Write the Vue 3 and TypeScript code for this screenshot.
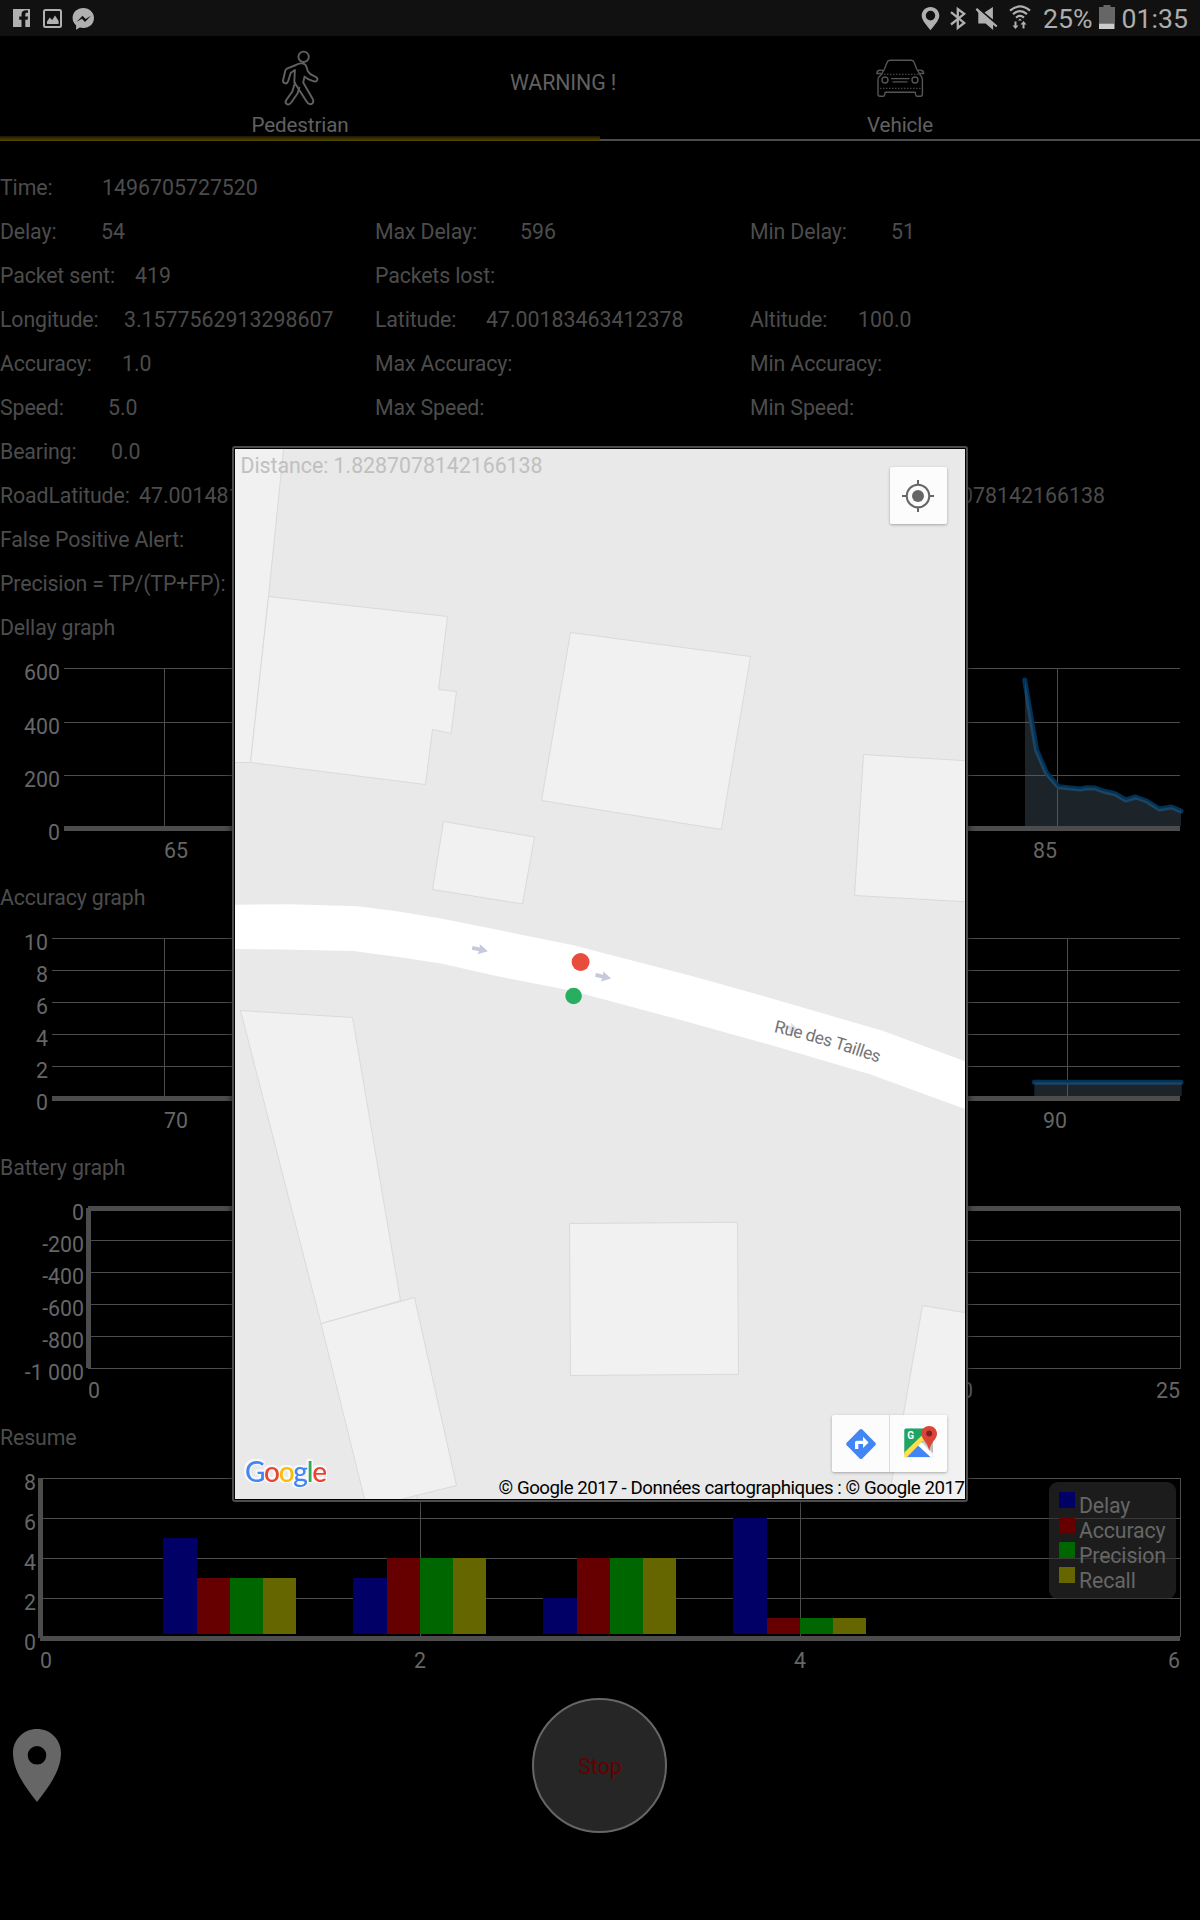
<script setup lang="ts">
interface Field {
  label: string
  value?: string
  offset?: number
}

interface Tick {
  text: string
  x: number
  anchor: 'start' | 'middle' | 'end'
}

interface Chart {
  title: string
  left: number
  grid: number[]
  axisY: number
  bottom: number
  verticals: number[]
  yLabels: string[]
  yPositions: number[]
  ticks: Tick[]
  leftAxis: boolean
  line?: string
  area?: string
  bars?: boolean
}

const rows: Field[][] = [
  [{ label: 'Time:', value: '1496705727520', offset: 102 }],
  [
    { label: 'Delay:', value: '54', offset: 101 },
    { label: 'Max Delay:', value: '596', offset: 145 },
    { label: 'Min Delay:', value: '51', offset: 141 },
  ],
  [
    { label: 'Packet sent:', value: '419', offset: 135 },
    { label: 'Packets lost:' },
  ],
  [
    { label: 'Longitude:', value: '3.1577562913298607', offset: 124 },
    { label: 'Latitude:', value: '47.00183463412378', offset: 111 },
    { label: 'Altitude:', value: '100.0', offset: 108 },
  ],
  [
    { label: 'Accuracy:', value: '1.0', offset: 122 },
    { label: 'Max Accuracy:' },
    { label: 'Min Accuracy:' },
  ],
  [
    { label: 'Speed:', value: '5.0', offset: 108 },
    { label: 'Max Speed:' },
    { label: 'Min Speed:' },
  ],
  [{ label: 'Bearing:', value: '0.0', offset: 111 }],
  [
    { label: 'RoadLatitude:', value: '47.001481', offset: 139 },
    { label: '' },
    { label: '', value: '1.8287078142166138', offset: 145.5 },
  ],
  [{ label: 'False Positive Alert:' }],
  [{ label: 'Precision = TP/(TP+FP):' }],
]

const charts: Chart[] = [
  {
    title: 'Dellay graph',
    left: 64,
    grid: [19, 73, 126],
    axisY: 177,
    bottom: 178,
    verticals: [164, 1057],
    yLabels: ['600', '400', '200', '0'],
    yPositions: [19, 73, 126, 179],
    ticks: [
      { text: '65', x: 164, anchor: 'start' },
      { text: '85', x: 1057, anchor: 'end' },
    ],
    leftAxis: false,
    line: '1024.7,31 1036.5,101 1046.5,124 1058.3,137.7 1080,140 1087,138.8 1095,139 1103,142 1115,144.7 1125.7,151 1135.7,148 1146.7,152 1159.3,160 1171.7,158 1181,162',
    area: '1025,31 1036.5,101 1046.5,124 1058.3,137.7 1080,140 1087,138.8 1095,139 1103,142 1115,144.7 1125.7,151 1135.7,148 1146.7,152 1159.3,160 1171.7,158 1181,162 1181,177 1025,177',
  },
  {
    title: 'Accuracy graph',
    left: 52,
    grid: [19, 51, 83, 115, 147],
    axisY: 177,
    bottom: 178,
    verticals: [164, 1067],
    yLabels: ['10', '8', '6', '4', '2', '0'],
    yPositions: [19, 51, 83, 115, 147, 179],
    ticks: [
      { text: '70', x: 164, anchor: 'start' },
      { text: '90', x: 1067, anchor: 'end' },
    ],
    leftAxis: false,
    line: '1034.3,163.3 1181,163.3',
    area: '1034.3,163.3 1181.7,163.3 1181.7,177 1034.3,177',
  },
  {
    title: 'Battery graph',
    left: 88,
    grid: [51, 83, 115, 147, 179],
    axisY: 17,
    bottom: 180,
    verticals: [1180],
    yLabels: ['0', '-200', '-400', '-600', '-800', '-1 000'],
    yPositions: [19, 51, 83, 115, 147, 179],
    ticks: [
      { text: '0', x: 88, anchor: 'start' },
      { text: '20', x: 973, anchor: 'end' },
      { text: '25', x: 1180, anchor: 'end' },
    ],
    leftAxis: true,
  },
  {
    title: 'Resume',
    left: 40,
    grid: [19, 59, 99, 139],
    axisY: 177,
    bottom: 178,
    verticals: [420, 800, 1180],
    yLabels: ['8', '6', '4', '2', '0'],
    yPositions: [19, 59, 99, 139, 179],
    ticks: [
      { text: '0', x: 40, anchor: 'start' },
      { text: '2', x: 420, anchor: 'middle' },
      { text: '4', x: 800, anchor: 'middle' },
      { text: '6', x: 1180, anchor: 'end' },
    ],
    leftAxis: true,
    bars: true,
  },
]

const series = [
  { name: 'Delay', color: '#000066' },
  { name: 'Accuracy', color: '#660000' },
  { name: 'Precision', color: '#006600' },
  { name: 'Recall', color: '#666600' },
]

const groups: number[][] = [
  [5, 3, 3, 3],
  [3, 4, 4, 4],
  [2, 4, 4, 4],
  [6, 1, 1, 1],
]

const barStarts = [0, 34, 67, 100]
const barWidths = [34, 33, 33, 33]

const bars = groups.flatMap((group, g) =>
  group.map((value, s) => ({
    x: 163 + g * 190 + barStarts[s],
    y: 179 - value * 20,
    width: barWidths[s],
    height: value * 20 - 4,
    color: series[s].color,
  })),
)

const buildings = [
  '235,440 284.5,440 283.5,449.5 268.5,596.5 250.5,762.5 235,762.5 230,762.5 230,440',
  '268.5,596.5 447.5,616.5 438.5,689.5 456.5,691.5 451,733.5 432.5,729.5 425.5,784.5 250.5,762.5',
  '570.5,632.5 750.5,656.5 721.3,829.5 541.5,800.5',
  '443.5,821.5 534.5,837 522.5,904 432.5,889.5',
  '863.5,754.5 970,761 970,902 854.5,895.5',
  '240.5,1010.5 352.5,1017.5 400.5,1300.7 321,1323.7',
  '321,1323.7 414.5,1297.5 456.5,1485.5 400,1499.5 395,1505 366,1505',
  '569.5,1223.5 737.5,1222.3 738.5,1374.3 570.5,1375.5',
  '922.5,1305.5 970,1313.5 970,1505 887.5,1505',
]
</script>

<template>
  <div class="screen">
    <header class="status">
      <svg class="notifications" width="100" height="36" viewBox="0 0 100 36">
        <path fill="#b0b0b0" fill-rule="evenodd" d="M13 9h17v18h-4.7v-7.200h2.300l.5-3.300h-2.800v-2c0-1.200.5-1.700 1.700-1.700H28V10.500c-4-.700-6.500.700-6.500 4v2h-2.300v3.300h2.300V27H13z" />
        <rect x="44" y="10" width="17" height="17" rx="1.500" fill="none" stroke="#b0b0b0" stroke-width="2" />
        <path fill="#b0b0b0" d="M47 24v-2.500l2.800-4 2.300 2.500 3-4.500 3.500 5.500v3z" />
        <path fill="#b0b0b0" d="M83.300 8C77.200 8 72.600 12.300 72.600 18c0 3 1.300 5.500 3.500 7.300v4.500l3.700-2.200c1.100.3 2.300.5 3.500.5 6.100 0 10.700-4.300 10.700-10S89.400 8 83.300 8z" />
        <path fill="#111" d="M76.500 22l6-6.300 3.100 3.200 5.400-3.200-6 6.300-3.100-3.200z" />
      </svg>
      <div class="system">
        <svg width="114" height="36" viewBox="920 0 114 36">
          <path fill="#b0b0b0" fill-rule="evenodd" d="M930.500 7c-5 0-8.800 3.700-8.800 8.500 0 5.200 5.300 10 8.800 14.700 3.500-4.700 8.800-9.500 8.800-14.700 0-4.800-3.800-8.500-8.800-8.500zm0 3.700a4.700 4.900 0 1 1 0 9.800 4.700 4.900 0 1 1 0-9.800z" />
          <path fill="none" stroke="#b0b0b0" stroke-width="2.300" d="M951 12.200l13.200 10.700-6.400 5V9l6.400 4.800L951 24.500" />
          <path fill="#b0b0b0" d="M975.600 9.500l1.500-1.400 20.400 17.600-1.400 1.500-3-2.500v5.300l-7.500-6.500h-7.300v-10.700zM984.500 12.500l8.400-5.500v12.500z" />
          <g fill="none" stroke="#b0b0b0" stroke-width="2.200">
            <path d="M1010 10.700q10-8.500 20 0M1013 14.200q7-6 14 0M1016 17.700q4-3.500 8 0" />
          </g>
          <path fill="#b0b0b0" d="M1020 18.500l2 2h-4zM1014.500 21.500h2v4h2l-3 3.500-3-3.500h2zM1022.500 28.500h2v-4h2l-3-3.500-3 3.500h2z" />
        </svg>
        <span class="percent">25%</span>
        <svg class="battery" width="16" height="36" viewBox="0 0 16 36">
          <path fill="#666" d="M4.500 5h7v2H16v16.500H0V7h4.500z" />
          <rect y="23.500" width="15.500" height="5.500" fill="#ccc" />
        </svg>
        <span class="clock">01:35</span>
      </div>
    </header>

    <nav class="tabs">
      <div class="tab active">
        <svg width="50" height="76" viewBox="274 36 50 76">
          <g fill="none" stroke="#616161" stroke-width="1.900" stroke-linejoin="round">
            <circle cx="302.600" cy="56.800" r="5.200" />
            <path d="M295 65c3-2 7-2.200 9-.5 2 1.500 1.500 4 3 7 1.300 2.200 3.300 3.400 5.700 4.400 2.600 1 4 1.700 3.700 3.700-.4 1.900-2 2.300-4.200 1.600-3.500-1-6.500-2.400-8.700-4.600l-1.300 6 9.500 16.300c1.300 2.400.4 4.500-1.300 5.100-1.800.6-3.600-.3-4.800-2.500l-12.300-19.300.6-12.200-4.200 3-2.600 8.300c-.6 1.800-2 2.400-3.500 1.900-1.400-.5-1.800-1.600-1.400-3.500l2-8.700c.2-1.100.8-1.700 1.700-2.300z" />
            <path d="M294.300 82l-3 9.500-6 8.500c-1.200 2-.7 3.300.4 4 1.600 1 3 .4 4.500-1.500l6.300-9 2-6.500" />
          </g>
        </svg>
        <span>Pedestrian</span>
      </div>
      <div class="tab">
        <svg width="54" height="76" viewBox="873 36 54 76">
          <g fill="none" stroke="#555" stroke-width="1.400" stroke-linejoin="round">
            <path d="M881 75l3.500-6 2.500-6.500c.5-1.600 1.300-2.200 3-2.200h21.200c1.700 0 2.500.6 3 2.200l2.500 6.500 3.500 6c1.800 1.500 2.200 3 2.200 5v14c0 1.600-.6 2.300-2 2.300h-3.200c-1.400 0-1.700-.7-1.900-4.100h-30.200c-.2 3.400-.5 4.100-1.900 4.100H880c-1.400 0-2-.7-2-2.300V80c0-2 .8-3.500 3-5z" />
            <path d="M883.500 70.500c-4.500-1-6.500 0-6.700 3h4.700M917 70.500c4.500-1 6.500 0 6.700 3H919" />
            <circle cx="885" cy="80" r="3" />
            <circle cx="915" cy="80" r="3" />
            <path d="M891 78.600h18.500M892.500 81.900h15" />
            <path stroke-width="1" stroke-dasharray="1.500 1.500" d="M881 74.300h39M880 88.300h41" />
          </g>
        </svg>
        <span>Vehicle</span>
      </div>
      <span class="warning">WARNING !</span>
    </nav>

    <main>
      <section class="fields">
        <div v-for="(row, r) in rows" :key="r" class="row">
          <div v-for="(field, f) in row" :key="f" class="field">
            <span class="label" :style="{ width: field.offset ? field.offset + 'px' : 'auto' }">{{ field.label }}</span>
            <span v-if="field.value">{{ field.value }}</span>
          </div>
        </div>
      </section>

      <section v-for="chart in charts" :key="chart.title" class="chart">
        <h2>{{ chart.title }}</h2>
        <svg width="1200" height="226" viewBox="0 0 1200 226">
          <g fill="#4c4c4c">
            <rect v-for="y in chart.grid" :key="'g' + y" :x="chart.left" :y="y" :width="1180 - chart.left" height="1" />
            <rect v-for="x in chart.verticals" :key="'v' + x" :x="x" y="19" width="1" :height="chart.bottom - 19" />
            <rect :x="chart.left" :y="chart.axisY" :width="1180 - chart.left" height="5" />
            <rect v-if="chart.leftAxis" :x="chart.left - 2" y="19" width="5" height="160" />
          </g>
          <g class="scale">
            <text
              v-for="(label, i) in chart.yLabels"
              :key="label"
              :x="chart.left - 4"
              :y="chart.yPositions[i] + 12"
              text-anchor="end"
            >{{ label }}</text>
            <text
              v-for="tick in chart.ticks"
              :key="'t' + tick.text"
              :x="tick.x"
              y="208.500"
              :text-anchor="tick.anchor"
            >{{ tick.text }}</text>
          </g>
          <template v-if="chart.line">
            <polyline :points="chart.line" fill="none" stroke="#003359" stroke-width="5" stroke-linecap="round" stroke-linejoin="round" />
            <polygon :points="chart.area" fill="#506475" fill-opacity="0.350" />
          </template>
          <template v-if="chart.bars">
            <rect
              v-for="(bar, i) in bars"
              :key="'b' + i"
              :x="bar.x"
              :y="bar.y"
              :width="bar.width"
              :height="bar.height"
              :fill="bar.color"
            />
            <rect x="1049" y="23" width="127" height="117" rx="9" fill="#2f2f2f" fill-opacity="0.600" />
            <g v-for="(item, i) in series" :key="item.name" class="scale legend">
              <rect x="1059" :y="33 + i * 25" width="16" height="16" :fill="item.color" />
              <text x="1079" :y="54 + i * 25">{{ item.name }}</text>
            </g>
          </template>
        </svg>
      </section>
    </main>

    <footer class="actions">
      <svg class="pin" width="50" height="74" viewBox="0 0 50 74">
        <path fill="#666" fill-rule="evenodd" d="M25 0C11.500 0 1 10.600 1 24c0 18 12.500 34 24 49 11.500-15 24-31 24-49C49 10.600 38.500 0 25 0zm0 17a9.300 9.300 0 1 1 0 18.600A9.300 9.300 0 1 1 25 17z" />
      </svg>
      <button class="stop" type="button">Stop</button>
    </footer>

    <div class="dialog">
      <svg class="map" width="730" height="1050" viewBox="235 449 730 1050">
        <rect x="235" y="449" width="730" height="1050" fill="#e9e9e9" />
        <g fill="#f1f1f1" stroke="#dadada" stroke-width="1">
          <polygon v-for="shape in buildings" :key="shape" :points="shape" />
          <path d="M417 1495v5" />
        </g>
        <path fill="#fff" d="M235 904.700L290 904.200 358 906.300 400 911.800 441 918.600 500 930.300 573.300 945.300 691.700 976 783 1001.700 883.300 1031 965 1061.300V1109L870 1074.300 776.700 1046.700 681.700 1020.300 571.700 990.700 500 976.700 441 963.500 400 957.300 353 951 284 949.400 235 949.100z" />
        <g fill="#c5c9dc">
          <path transform="translate(480 949.500) rotate(12)" d="M-8-2H-.5L-1.500-5.300 8 0-1.500 5.300-.5 2H-8z" />
          <path transform="translate(603.300 976.700) rotate(13)" d="M-8-2H-.5L-1.500-5.300 8 0-1.500 5.300-.5 2H-8z" />
          <path opacity="0.500" transform="translate(791 1028) rotate(15)" d="M-8-2H-.5L-1.500-5.300 8 0-1.500 5.300-.5 2H-8z" />
        </g>
        <path id="street" fill="none" d="M773.500 1032Q828 1044.500 886 1065.500" />
        <text class="street"><textPath href="#street" textLength="109.500">Rue des Tailles</textPath></text>
        <circle cx="580.600" cy="962" r="9" fill="#e74c3c" />
        <circle cx="573.600" cy="996" r="8.300" fill="#27ae60" />
        <text class="distance" x="240.500" y="472.500" textLength="302">Distance: 1.8287078142166138</text>
        <text class="google" x="245" y="1482" textLength="82">
          <tspan fill="#4285f4">G</tspan><tspan fill="#ea4335">o</tspan><tspan fill="#fbbc05">o</tspan><tspan fill="#4285f4">g</tspan><tspan fill="#34a853">l</tspan><tspan fill="#ea4335">e</tspan>
        </text>
        <text class="copyright" x="498.500" y="1493.500" textLength="466.500">© Google 2017 - Données cartographiques : © Google 2017</text>
      </svg>
      <div class="tool locate">
        <svg width="57" height="57" viewBox="-28.500 -28.500 57 57">
          <g transform="translate(-0.500 0.500)" fill="none" stroke="#666" stroke-width="2">
            <circle r="11.300" />
            <path d="M0-16v5M0 16v-5M-16 0h5M16 0h-5" />
            <circle r="6" fill="#666" stroke="none" />
          </g>
        </svg>
      </div>
      <div class="tool links">
        <svg width="57" height="57" viewBox="832 1415 57 57">
          <path fill="#4285f4" d="M859.700 1429.600q1.300-1 2.600 0l13 13.100q1.200 1.300 0 2.600l-13 13.100q-1.300 1-2.600 0l-13-13.100q-1.200-1.300 0-2.600z" />
          <path fill="#fff" d="M855 1449v-6.500q0-1.800 1.800-1.800h6.200v-3.900l5.600 5.600-5.600 5.500v-3.900h-4.700v5z" />
        </svg>
        <i class="divider"></i>
        <svg width="57" height="57" viewBox="890 1415 57 57">
          <rect x="904.300" y="1428.500" width="28.700" height="29" rx="2" fill="#e4e4e4" />
          <path fill="#1fa463" d="M906 1428.500h19v12l-20.700 14v-24q0-2 1.700-2z" />
          <path fill="#4285f4" d="M905.500 1457l13.500-12.500 12 12.500z" />
          <path fill="#fff" d="M918 1445.500l3-3.500 12 13-2 2.500z" />
          <path fill="#bdbdbd" d="M922 1441l6-4 5 2v14z" />
          <path fill="#ffdd4b" d="M904.300 1452.500l18-17.500 3 3.500-18.700 18.900h-1.300q-1 0-1-1z" />
          <path fill="#db4437" d="M929.200 1426c-4.300 0-7.800 3.400-7.800 7.700 0 6 6 7.300 7.800 17 1.800-9.700 7.800-11 7.800-17 0-4.300-3.500-7.700-7.800-7.700z" />
          <circle cx="929.200" cy="1433.500" r="2.900" fill="#7b231e" />
          <text x="907.300" y="1439.300" class="maps-letter">G</text>
        </svg>
      </div>
    </div>
  </div>
</template>

<style>
body {
  background: #000;
}
</style>

<style scoped>
.screen {
  position: relative;
  display: flex;
  flex-direction: column;
  width: 1200px;
  height: 1920px;
  overflow: hidden;
  background: #000;
  color: #4c4c4c;
  font-family: Roboto, "Liberation Sans", sans-serif;
  font-size: 21.33px;
}

svg {
  display: block;
  flex: none;
}

.status {
  display: flex;
  justify-content: space-between;
  height: 36px;
  background: #111;
  color: #adadad;
  font-size: 26.67px;
  line-height: 38px;
}

.system {
  display: flex;
  padding-right: 12px;
}

.percent {
  margin-left: 9.5px;
}

.battery {
  margin: 0 7px 0 6px;
}

.tabs {
  position: relative;
  display: flex;
  height: 105px;
  color: #616161;
}

.tab {
  display: flex;
  flex: 1;
  flex-direction: column;
  align-items: center;
  box-sizing: border-box;
  border-bottom: 2px solid #4c4c4c;
}

.tab.active {
  border: 0;
  background: linear-gradient(#1d1800, #584900) bottom / 100% 5px no-repeat;
}

.tab span {
  font-size: 20.6px;
  letter-spacing: -0.1px;
  line-height: 27px;
}

.warning {
  position: absolute;
  top: 34px;
  left: 510px;
  letter-spacing: -0.1px;
  line-height: 26px;
}

.fields {
  margin-top: 24px;
}

.row {
  display: grid;
  grid-template-columns: 375px 375px 450px;
  height: 44px;
  line-height: 45px;
}

.field {
  display: flex;
  white-space: nowrap;
}

.label {
  flex: none;
  letter-spacing: -0.13px;
}

.chart h2 {
  height: 44px;
  margin: 0;
  font-size: inherit;
  font-weight: 400;
  letter-spacing: -0.13px;
  line-height: 45px;
}

.scale {
  fill: #666;
}

.legend text {
  letter-spacing: -0.15px;
}

.actions {
  display: grid;
  grid-template-columns: 532px 135px;
  align-items: center;
  height: 135px;
  margin-top: 13px;
}

.pin {
  margin-left: 12px;
}

.stop {
  width: 135px;
  height: 135px;
  padding: 2px 0 0 1px;
  border: 2px solid #666;
  border-radius: 50%;
  background: #262626;
  color: #660000;
  font: inherit;
}

.dialog {
  position: absolute;
  top: 446px;
  left: 232px;
  box-sizing: border-box;
  width: 736px;
  height: 1056px;
  padding: 1px;
  border: 2px solid #4c4c4c;
  border-radius: 3px;
  background: #000;
  box-shadow: 0 0 7px rgba(0, 0, 0, 0.8);
}

.street {
  fill: #757575;
  font-size: 17.3px;
}

.distance {
  fill: #c0c0c0;
}

.google {
  font-family: Lato, sans-serif;
  font-size: 28px;
  font-weight: 500;
  filter: drop-shadow(1.5px 0 0.5px #f8f8f8) drop-shadow(-1.5px 0 0.5px #f8f8f8) drop-shadow(0 1.5px 0.5px #f8f8f8) drop-shadow(0 -1.5px 0.5px #f8f8f8);
}

.copyright {
  fill: #000;
  font-size: 18.67px;
}

.maps-letter {
  fill: #fff;
  font-size: 10px;
  font-weight: 700;
}

.tool {
  position: absolute;
  right: 19px;
  display: flex;
  border-radius: 2px;
  background: rgba(255, 255, 255, 0.85);
  box-shadow: 0 1px 3px rgba(0, 0, 0, 0.3);
}

.locate {
  top: 19px;
}

.links {
  bottom: 28px;
}

.divider {
  width: 1px;
  background: #dcdcdc;
}
</style>
